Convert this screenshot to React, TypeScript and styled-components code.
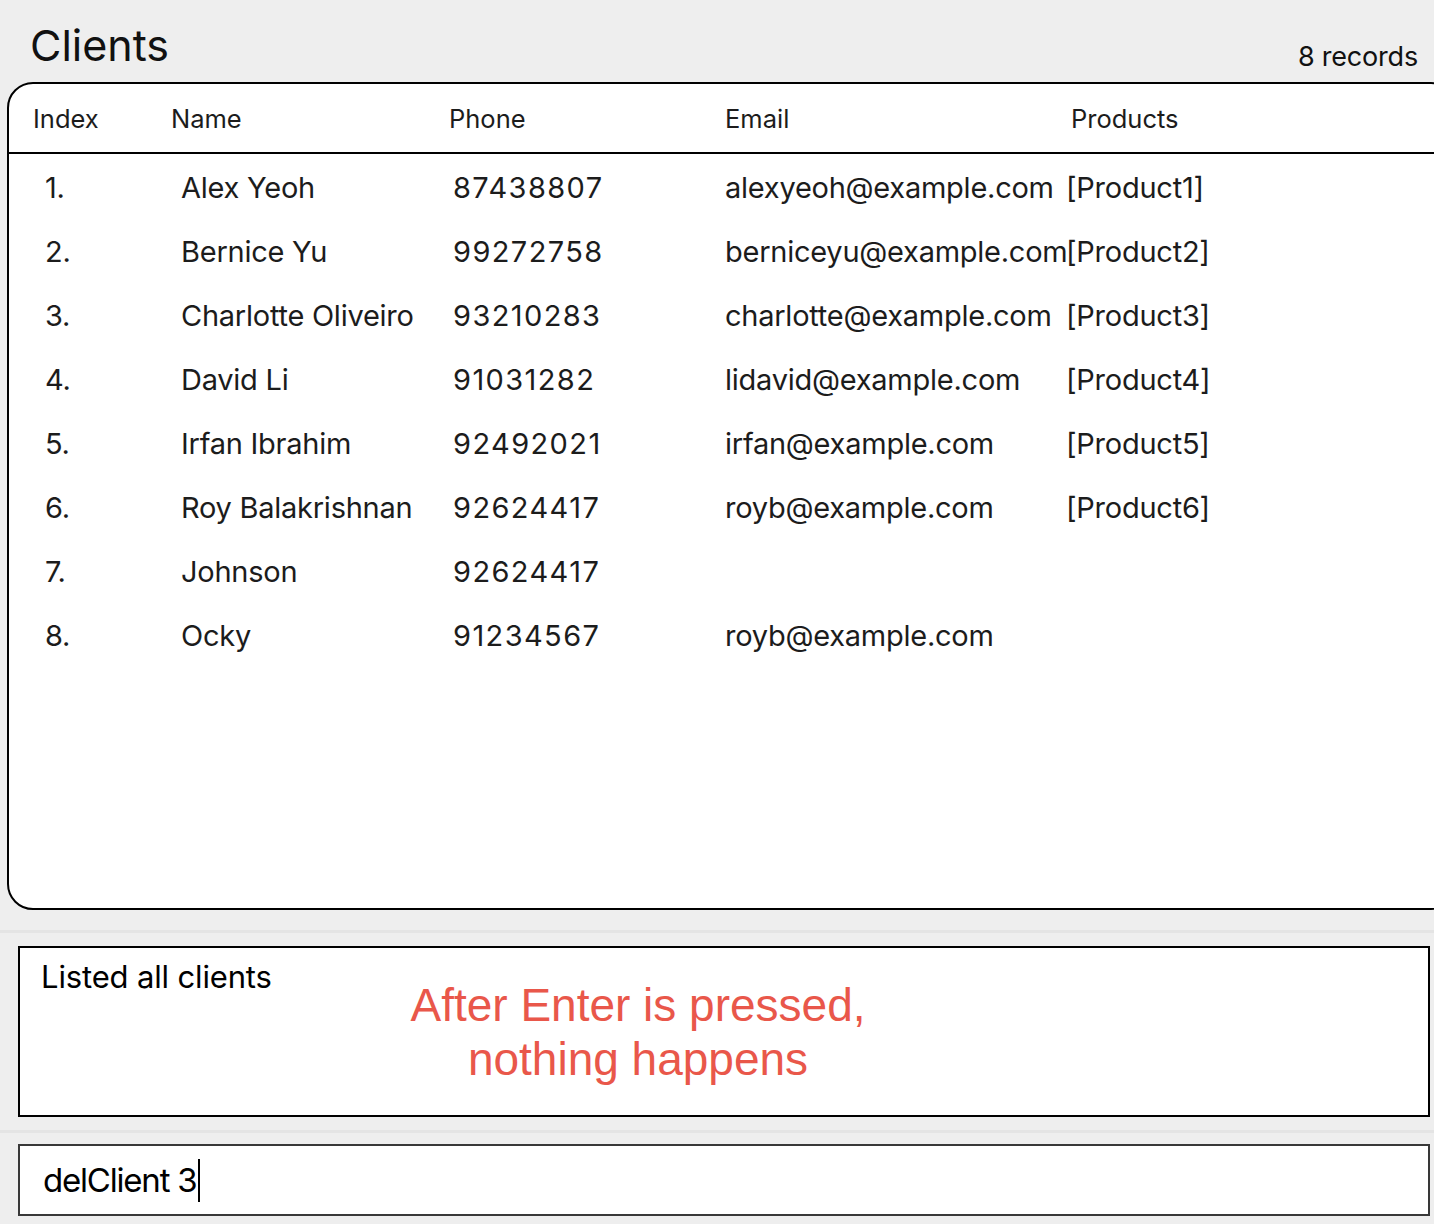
import styled, { createGlobalStyle } from "styled-components";

const GlobalStyle = createGlobalStyle`
  html, body {
    margin: 0;
    padding: 0;
    background: #eeeeee;
    overflow: hidden;
  }
  body {
    font-family: Inter, "Noto Sans", sans-serif;
    color: #1c1c1c;
  }
`;

const Page = styled.div`
  width: 1434px;
  height: 1224px;
  display: flex;
  flex-direction: column;
  overflow: hidden;
`;

const TitleBar = styled.div`
  height: 82px;
  display: flex;
  justify-content: space-between;
  align-items: flex-end;
  padding: 0 16px 0 30px;
  box-sizing: border-box;
`;

const Title = styled.h1`
  margin: 0 0 15px;
  font-size: 43px;
  font-weight: 400;
  line-height: 1;
  color: #111;
`;

const RecordCount = styled.span`
  margin-bottom: 12px;
  font-size: 27px;
  letter-spacing: -0.2px;
  line-height: 1;
  color: #111;
`;

const Panel = styled.section`
  margin-left: 7px;
  width: 1450px;
  height: 828px;
  box-sizing: border-box;
  border: 2px solid #000;
  border-radius: 26px;
  background: #fff;
  overflow: hidden;
`;

const HeaderRow = styled.div`
  height: 68px;
  display: grid;
  grid-template-columns: 138px 278px 276px 346px 1fr;
  align-items: center;
  padding-left: 24px;
  border-bottom: 2px solid #000;
`;

const HeaderCell = styled.div`
  font-size: 25.5px;
  color: #1c1c1c;
`;

const RowList = styled.div`
  padding-top: 1px;
`;

const Row = styled.div`
  height: 64px;
  display: grid;
  grid-template-columns: 136px 272px 272px 341px 1fr;
  align-items: center;
  padding-left: 36px;
`;

const Cell = styled.div<{ $numeric?: boolean }>`
  font-size: 29px;
  letter-spacing: ${(p) => (p.$numeric ? "1.4px" : "-0.25px")};
  color: #1c1c1c;
  white-space: nowrap;
`;

const Divider = styled.div`
  height: 3px;
  background: #e4e4e4;
`;

const ResultArea = styled.div`
  padding: 20px 0 0;
  display: flex;
  flex-direction: column;
`;

const ResultBox = styled.div`
  position: relative;
  margin: 13px 0 0 18px;
  width: 1412px;
  height: 171px;
  box-sizing: border-box;
  border: 2px solid #000;
  background: #fff;
  padding: 10px 21px;
  font-size: 31px;
  letter-spacing: -0.15px;
  color: #000;
`;

const Annotation = styled.div`
  position: absolute;
  left: 318px;
  top: 30px;
  width: 600px;
  text-align: center;
  font-family: "Liberation Sans", Arial, sans-serif;
  font-size: 46px;
  letter-spacing: 0;
  line-height: 54px;
  color: #e9574a;
`;

const CommandArea = styled.div`
  padding-top: 13px;
`;

const CommandBox = styled.div`
  margin: 11px 0 0 18px;
  width: 1412px;
  height: 72px;
  box-sizing: border-box;
  border: 2px solid #383838;
  background: #fff;
  display: flex;
  align-items: center;
  padding-left: 23px;
  font-size: 33px;
  letter-spacing: -1.2px;
  color: #000;
`;

const Caret = styled.span`
  display: inline-block;
  width: 2px;
  height: 43px;
  background: #000;
  margin-left: 1px;
`;

interface Client {
  name: string;
  phone: string;
  email: string;
  products: string;
}

const clients: Client[] = [
  { name: "Alex Yeoh", phone: "87438807", email: "alexyeoh@example.com", products: "[Product1]" },
  { name: "Bernice Yu", phone: "99272758", email: "berniceyu@example.com", products: "[Product2]" },
  { name: "Charlotte Oliveiro", phone: "93210283", email: "charlotte@example.com", products: "[Product3]" },
  { name: "David Li", phone: "91031282", email: "lidavid@example.com", products: "[Product4]" },
  { name: "Irfan Ibrahim", phone: "92492021", email: "irfan@example.com", products: "[Product5]" },
  { name: "Roy Balakrishnan", phone: "92624417", email: "royb@example.com", products: "[Product6]" },
  { name: "Johnson", phone: "92624417", email: "", products: "" },
  { name: "Ocky", phone: "91234567", email: "royb@example.com", products: "" },
];

export default function App() {
  return (
    <Page>
      <GlobalStyle />
      <TitleBar>
        <Title>Clients</Title>
        <RecordCount>{clients.length} records</RecordCount>
      </TitleBar>
      <Panel>
        <HeaderRow>
          <HeaderCell>Index</HeaderCell>
          <HeaderCell>Name</HeaderCell>
          <HeaderCell>Phone</HeaderCell>
          <HeaderCell>Email</HeaderCell>
          <HeaderCell>Products</HeaderCell>
        </HeaderRow>
        <RowList>
          {clients.map((c, i) => (
            <Row key={i}>
              <Cell>{i + 1}.</Cell>
              <Cell>{c.name}</Cell>
              <Cell $numeric>{c.phone}</Cell>
              <Cell>{c.email}</Cell>
              <Cell>{c.products}</Cell>
            </Row>
          ))}
        </RowList>
      </Panel>
      <ResultArea>
        <Divider />
        <ResultBox>
          Listed all clients
          <Annotation>
            After Enter is pressed,
            <br />
            nothing happens
          </Annotation>
        </ResultBox>
      </ResultArea>
      <CommandArea>
        <Divider />
        <CommandBox>
          delClient 3<Caret />
        </CommandBox>
      </CommandArea>
    </Page>
  );
}
